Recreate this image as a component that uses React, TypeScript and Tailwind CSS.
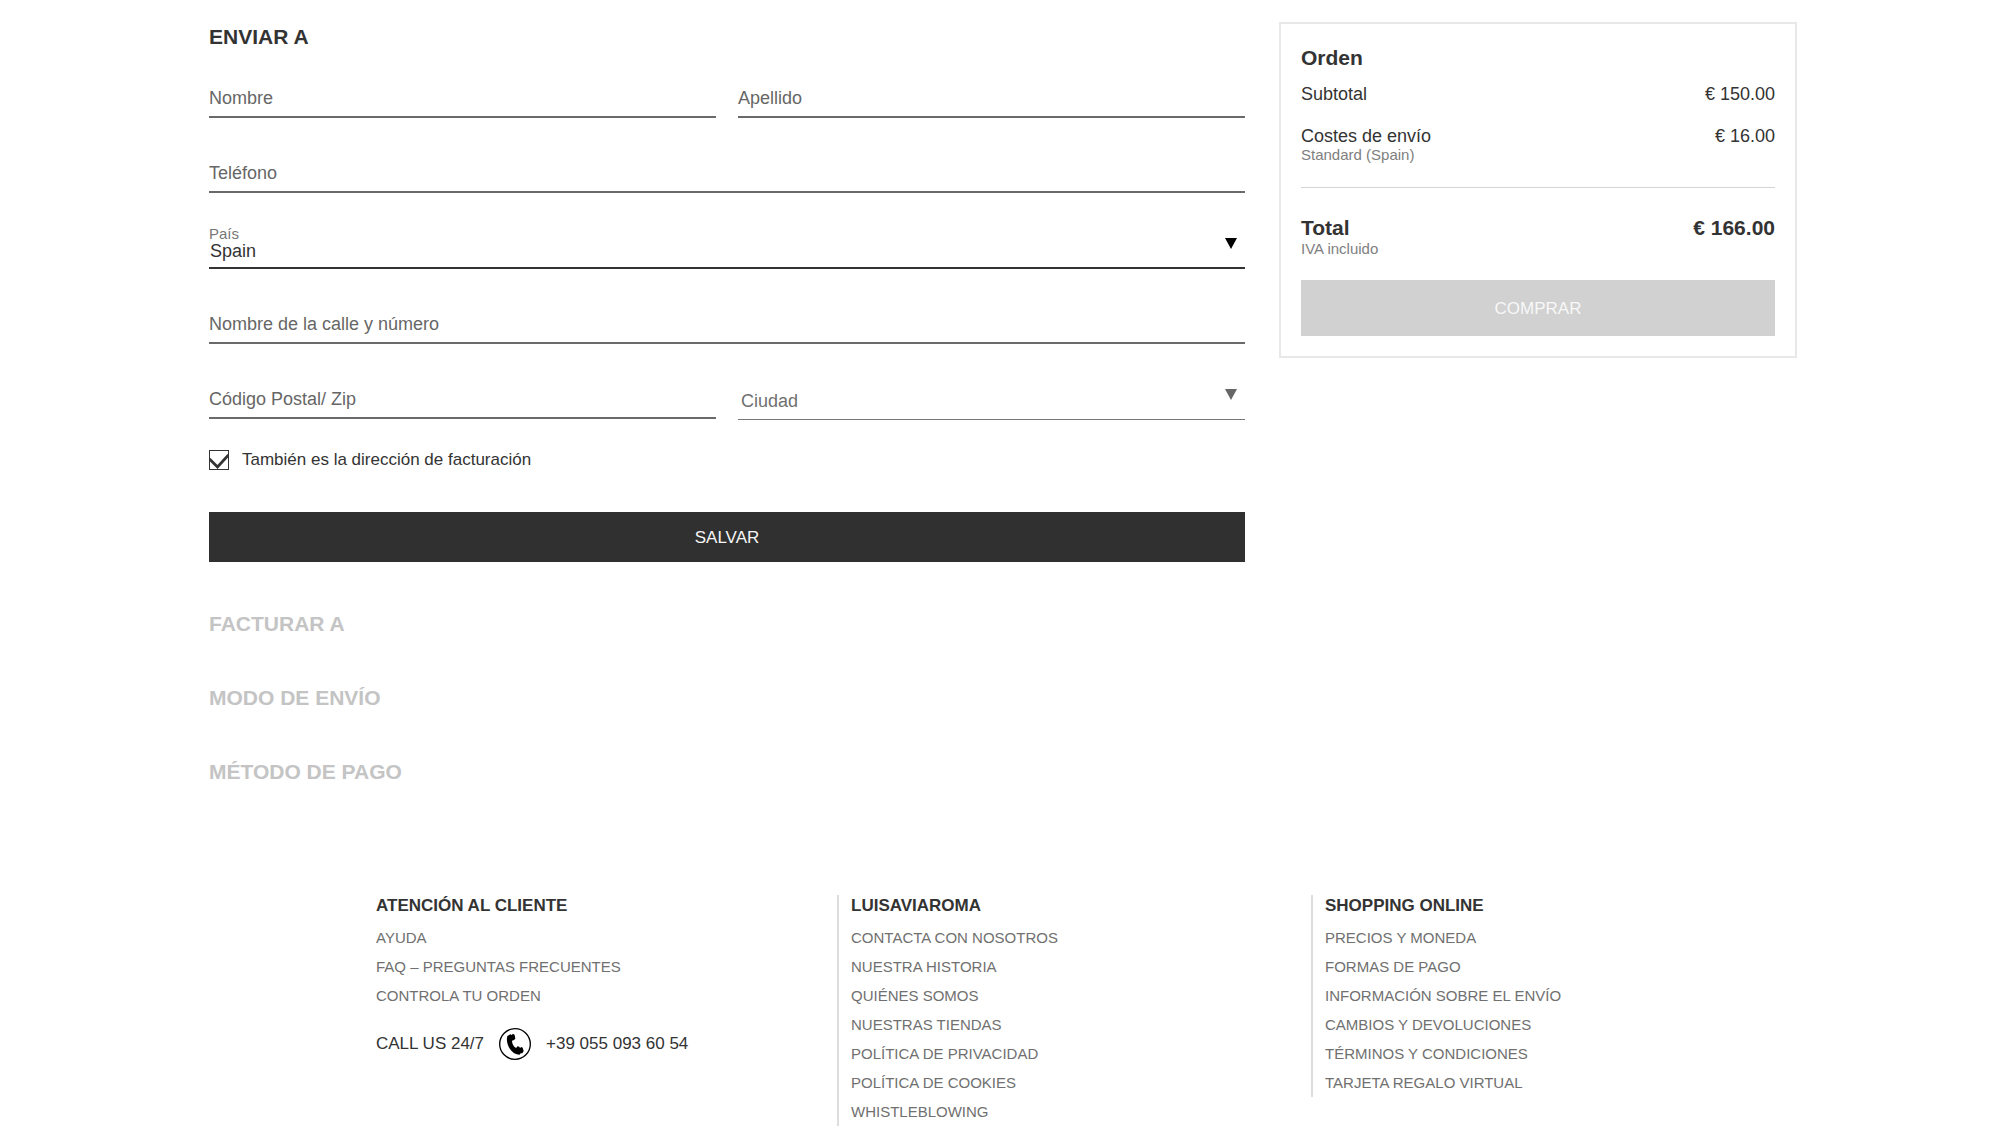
import React, { useState } from 'react';

interface LinkColumn {
  title: string;
  links: string[];
}

const customerCare: LinkColumn = {
  title: 'ATENCIÓN AL CLIENTE',
  links: ['AYUDA', 'FAQ – PREGUNTAS FRECUENTES', 'CONTROLA TU ORDEN'],
};

const company: LinkColumn = {
  title: 'LUISAVIAROMA',
  links: [
    'CONTACTA CON NOSOTROS',
    'NUESTRA HISTORIA',
    'QUIÉNES SOMOS',
    'NUESTRAS TIENDAS',
    'POLÍTICA DE PRIVACIDAD',
    'POLÍTICA DE COOKIES',
    'WHISTLEBLOWING',
  ],
};

const shopping: LinkColumn = {
  title: 'SHOPPING ONLINE',
  links: [
    'PRECIOS Y MONEDA',
    'FORMAS DE PAGO',
    'INFORMACIÓN SOBRE EL ENVÍO',
    'CAMBIOS Y DEVOLUCIONES',
    'TÉRMINOS Y CONDICIONES',
    'TARJETA REGALO VIRTUAL',
  ],
};

const pendingSteps = ['FACTURAR A', 'MODO DE ENVÍO', 'MÉTODO DE PAGO'];

// The label sits on the line and moves up once the field has a value
const TextField: React.FC<{ id: string; label: string; type?: string }> = ({ id, label, type = 'text' }) => (
  <div className="relative">
    <input
      id={id}
      type={type}
      placeholder=" "
      className="peer block h-[50px] w-full border-b-2 border-[#6a6a6a] bg-transparent pt-5 text-[18px] text-[#333] outline-none"
    />
    <label
      htmlFor={id}
      className="pointer-events-none absolute top-0 left-0 text-[15px] leading-4 text-[#666] peer-placeholder-shown:top-5 peer-placeholder-shown:text-[18px] peer-placeholder-shown:leading-5"
    >
      {label}
    </label>
  </div>
);

const Arrow: React.FC<{ className: string }> = ({ className }) => (
  <svg className={`pointer-events-none absolute top-5 right-2 h-[11px] w-3 ${className}`} viewBox="0 0 12 11" fill="currentColor" aria-hidden="true">
    <path d="M0 0h12L6 11z" />
  </svg>
);

const PhoneIcon = () => (
  <svg className="h-8 w-8 text-black" viewBox="0 0 96 96" fill="none" aria-hidden="true">
    <circle cx="48" cy="48" r="46" stroke="currentColor" strokeWidth="4" />
    <path
      d="M25 24l9-5 4 2 4-4 5 4 2 11-4 4-6 2c0 9 5 17 12 22l5-5 5 1 2 4 4-3 4 2 3 10-4 7-5 0-3 4-9-1C37 73 26 57 24 39c-1-6 0-10 1-15z"
      fill="currentColor"
    />
  </svg>
);

const FooterColumn: React.FC<{ column: LinkColumn; divided?: boolean; children?: React.ReactNode }> = ({ column, divided = false, children }) => (
  <div className={divided ? 'border-l-2 border-[#ddd] pl-3' : 'pl-[13px]'}>
    <h3 className="text-[17px] leading-[22px] font-bold text-[#333]">{column.title}</h3>
    <ul className="mt-1.5">
      {column.links.map(link => (
        <li key={link} className="text-[15px] leading-[29px] text-[#707070]">
          <a href="#" className="hover:underline">{link}</a>
        </li>
      ))}
    </ul>
    {children}
  </div>
);

const ShippingForm = () => {
  const [sameAddress, setSameAddress] = useState(true);
  const [country, setCountry] = useState('Spain');

  return (
    <form onSubmit={e => e.preventDefault()}>
      <h2 className="text-[21px] leading-6 font-bold">ENVIAR A</h2>

      <div className="mt-[19px] flex flex-col gap-[25px]">
        <div className="grid grid-cols-2 gap-[22px]">
          <TextField id="nombre" label="Nombre" />
          <TextField id="apellido" label="Apellido" />
        </div>
        <TextField id="telefono" label="Teléfono" type="tel" />

        <div className="relative">
          <label htmlFor="pais" className="absolute top-2 left-0 text-[15px] leading-4 text-[#777]">País</label>
          <select
            id="pais"
            value={country}
            onChange={e => setCountry(e.target.value)}
            className="block h-[51px] w-full appearance-none border-b-2 border-[#333] bg-transparent pt-[18px] pl-px text-[18px] text-[#333] outline-none"
          >
            <option>Spain</option>
          </select>
          <Arrow className="text-black" />
        </div>

        <TextField id="calle" label="Nombre de la calle y número" />

        <div className="grid grid-cols-2 items-start gap-[22px]">
          <TextField id="zip" label="Código Postal/ Zip" />
          <div className="relative">
            <select
              id="ciudad"
              aria-label="Ciudad"
              className="block h-[51px] w-full appearance-none border-b border-[#777] bg-transparent pt-[14px] pl-[3px] text-[18px] text-[#707070] outline-none"
            >
              <option>Ciudad</option>
            </select>
            <Arrow className="text-[#666]" />
          </div>
        </div>
      </div>

      <div className="mt-[30px] flex items-center">
        <div className="relative h-5 w-5">
          <input
            id="facturacion"
            type="checkbox"
            checked={sameAddress}
            onChange={e => setSameAddress(e.target.checked)}
            className="block h-5 w-5 appearance-none border border-[#333] bg-white"
          />
          {sameAddress && (
            <svg className="pointer-events-none absolute inset-0 h-5 w-5" viewBox="0 0 20 20" fill="none" aria-hidden="true">
              <path d="M.5 9l8 8L19.5 5" stroke="#333" strokeWidth="2.8" />
            </svg>
          )}
        </div>
        <label htmlFor="facturacion" className="pl-[13px] text-[17px] leading-5">También es la dirección de facturación</label>
      </div>

      <button type="submit" className="mt-[42px] block h-[50px] w-full bg-[#303030] pt-0.5 text-[17px] text-[#f5f5f5]">SALVAR</button>
    </form>
  );
};

const OrderSummary = () => (
  <aside className="border-2 border-[#e8e8e8] px-5 pt-[22px] pb-5">
    <h2 className="text-[21px] leading-6 font-bold">Orden</h2>
    <div className="mt-[14px] flex justify-between text-[18px] leading-5">
      <span>Subtotal</span>
      <span>€ 150.00</span>
    </div>
    <div className="mt-[22px] flex justify-between text-[18px] leading-5">
      <span>Costes de envío</span>
      <span>€ 16.00</span>
    </div>
    <p className="mt-px text-[15px] leading-4 text-[#808080]">Standard (Spain)</p>

    <div className="mt-6 flex justify-between border-t border-[#d4d4d4] pt-7 text-[21px] leading-6 font-bold">
      <span>Total</span>
      <span>€ 166.00</span>
    </div>
    <p className="mt-px text-[15px] leading-4 text-[#808080]">IVA incluido</p>
    <button type="button" className="mt-[23px] block h-14 w-full bg-[#d1d1d1] pt-0.5 text-[17px] text-[#f8f8f8]">COMPRAR</button>
  </aside>
);

export default function App() {
  return (
    <div className="min-h-screen bg-white font-['Liberation_Sans',Arial,sans-serif] text-[#333]">
      <main className="grid grid-cols-[2fr_1fr] items-start gap-[34px] pt-[22px] pr-[202px] pl-[209px]">
        <div className="pt-[3px]">
          <ShippingForm />
          <div className="mt-[50px] flex flex-col gap-[50px]">
            {pendingSteps.map(step => (
              <h2 key={step} className="text-[21px] leading-6 font-bold text-[#c4c4c4]">{step}</h2>
            ))}
          </div>
        </div>
        <OrderSummary />
      </main>

      <footer className="mt-[111px] grid grid-cols-3 items-start pr-[214px] pl-[363px]">
        <FooterColumn column={customerCare}>
          <div className="mt-[18px] flex items-center gap-[15px] text-[17px] leading-5">
            <span>CALL US 24/7</span>
            <PhoneIcon />
            <a href="tel:+390550936054">+39 055 093 60 54</a>
          </div>
        </FooterColumn>
        <FooterColumn column={company} divided />
        <FooterColumn column={shopping} divided />
      </footer>
    </div>
  );
}
